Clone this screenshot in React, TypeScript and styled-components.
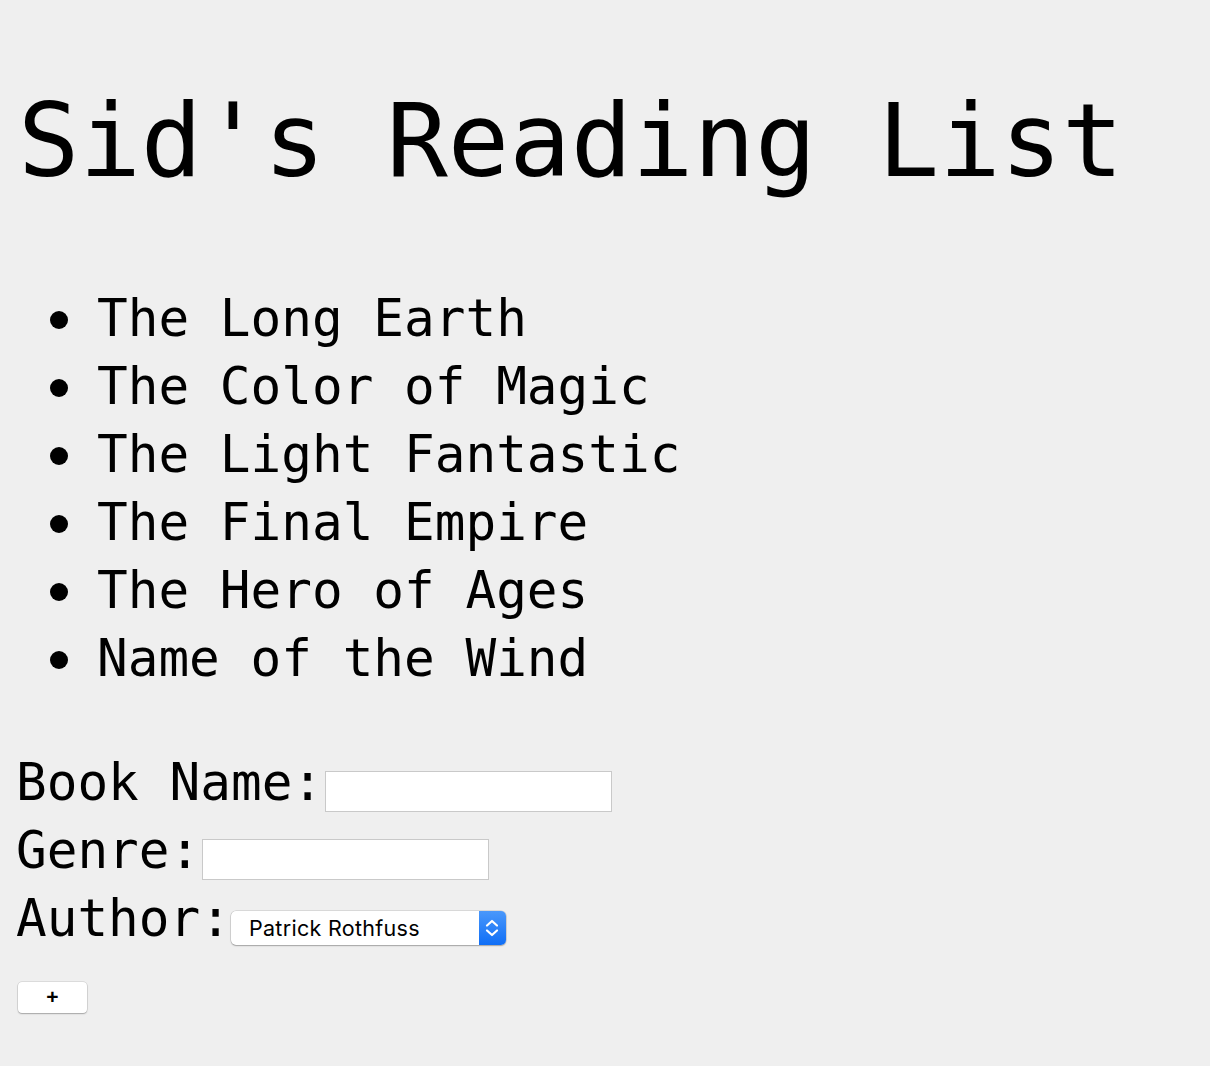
import React from "react";
import styled, {createGlobalStyle} from "styled-components";

const GlobalStyle = createGlobalStyle`
    html, body {
        margin: 0;
        padding: 0;
        background: #efefef;
    }
    body {
        font-family: "DejaVu Sans Mono", "Liberation Mono", monospace;
        color: #000;
    }
`;

const Page = styled.div`
    padding: 81px 16px 40px;
`;

const Heading = styled.h1`
    margin: 0;
    padding-left: 2px;
    font-size: 102px;
    font-weight: 400;
    line-height: 120px;
    white-space: nowrap;
`;

const BookList = styled.ul`
    margin: 84px 0 0;
    padding-left: 82px;
    list-style: none;
`;

const BookItem = styled.li`
    font-size: 51px;
    line-height: 68px;
    white-space: nowrap;

    &::before {
        content: "";
        display: inline-block;
        width: 18px;
        height: 18px;
        margin: 0 29px 0 -48px;
        border-radius: 50%;
        background: #000;
        vertical-align: 7px;
    }
`;

const Form = styled.form`
    margin-top: 56px;
`;

const Row = styled.div`
    font-size: 51px;
    line-height: 68px;
    white-space: nowrap;
`;

const TextInput = styled.input`
    vertical-align: top;
    box-sizing: border-box;
    width: 287px;
    height: 41px;
    margin: 22px 0 0 2px;
    border: 1px solid #c9c9c9;
    background: #fff;
    font-family: "Liberation Sans", sans-serif;
    font-size: 15px;
    padding: 2px 6px;
    outline: none;
`;

const SelectBox = styled.span`
    display: inline-flex;
    vertical-align: top;
    box-sizing: border-box;
    width: 275px;
    height: 34px;
    margin-top: 26px;
    border-radius: 5px;
    background: #fff;
    box-shadow: 0 0 0 0.5px rgba(0, 0, 0, .18), 0 1px 1.5px rgba(0, 0, 0, .25);
    overflow: hidden;
`;

const NativeSelect = styled.select`
    flex: 1;
    min-width: 0;
    appearance: none;
    border: none;
    background: transparent;
    font-family: "Inter", "Liberation Sans", sans-serif;
    font-size: 21.5px;
    letter-spacing: 0.3px;
    color: #000;
    padding: 0 0 0 18px;
    outline: none;
`;

const Stepper = styled.span`
    display: flex;
    align-items: center;
    justify-content: center;
    width: 27px;
    background: linear-gradient(#4a98fb, #0f6ef6);
`;

const AddButton = styled.button`
    display: block;
    box-sizing: border-box;
    width: 69px;
    height: 31px;
    margin: 29px 0 0 2px;
    border: none;
    border-radius: 4px;
    background: #fff;
    box-shadow: 0 0 0 0.5px rgba(0, 0, 0, .16), 0 1px 1.5px rgba(0, 0, 0, .25);
    font-family: "Liberation Sans", sans-serif;
    font-size: 21px;
    font-weight: 700;
    line-height: 1;
    color: #000;
    padding: 0 0 2px;
`;

const books = [
    "The Long Earth",
    "The Color of Magic",
    "The Light Fantastic",
    "The Final Empire",
    "The Hero of Ages",
    "Name of the Wind"
];

const authors = ["Patrick Rothfuss", "Terry Pratchett", "Brandon Sanderson"];

export default function App() {
    return (
        <>
            <GlobalStyle/>
            <Page>
                <Heading>Sid's Reading List</Heading>
                <BookList>
                    {books.map(b => <BookItem key={b}>{b}</BookItem>)}
                </BookList>
                <Form onSubmit={e => e.preventDefault()}>
                    <Row>
                        <label htmlFor="name">Book Name:</label>
                        <TextInput id="name" type="text"/>
                    </Row>
                    <Row>
                        <label htmlFor="genre">Genre:</label>
                        <TextInput id="genre" type="text"/>
                    </Row>
                    <Row>
                        <label htmlFor="author">Author:</label>
                        <SelectBox>
                            <NativeSelect id="author" defaultValue={authors[0]}>
                                {authors.map(a => <option key={a} value={a}>{a}</option>)}
                            </NativeSelect>
                            <Stepper>
                                <svg width="14" height="24" viewBox="0 0 14 24" fill="none"
                                     stroke="#fff" strokeWidth="2.2" strokeLinecap="round" strokeLinejoin="round">
                                    <path d="M2 9.5 7 5 12 9.5"/>
                                    <path d="M2 14.5 7 19 12 14.5"/>
                                </svg>
                            </Stepper>
                        </SelectBox>
                    </Row>
                    <AddButton type="submit">+</AddButton>
                </Form>
            </Page>
        </>
    );
}
